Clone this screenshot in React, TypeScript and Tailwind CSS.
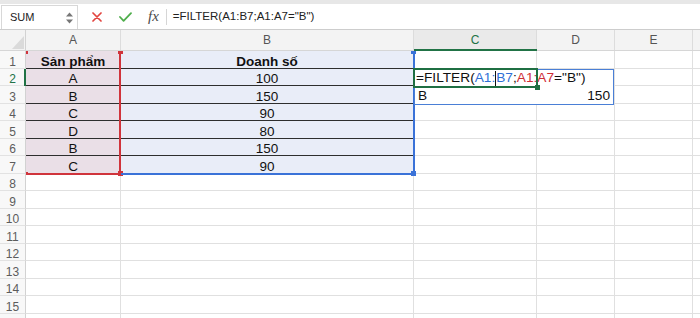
import React from "react";
import clsx from "clsx";

const colA: Record<number, string> = { 1: "Sản phẩm", 2: "A", 3: "B", 4: "C", 5: "D", 6: "B", 7: "C" };
const colB: Record<number, string> = { 1: "Doanh số", 2: "100", 3: "150", 4: "90", 5: "80", 6: "150", 7: "90" };

function Row({ n }: { n: number }) {
  const data = n <= 7;
  const dark = n <= 6;
  return (
    <div className="flex h-[17.5px] shrink-0">
      <div
        className={clsx(
          "relative w-[26px] shrink-0 border-r border-b border-r-[#d2d2d2] border-b-[#e2e2e2] bg-[#f8f8f8] flex items-end justify-center text-[12px] leading-[12px]",
          n === 2 ? "text-[#217346]" : "text-[#5c5c5c]"
        )}
      >
        {n <= 15 ? n : ""}
        {n === 2 && <span className="absolute right-[-1px] top-0 bottom-[-1px] w-[2px] bg-[#217346]" />}
      </div>
      <div
        className={clsx(
          "w-[95px] shrink-0 border-r border-b border-r-[#e0e0e0] flex items-end justify-center text-[13.5px] leading-[12px] text-[#111]",
          data ? "bg-[#eadfe7]" : "bg-white",
          dark ? "border-b-[#2e2e2e]" : "border-b-[#e0e0e0]",
          n === 1 && "font-bold"
        )}
      >
        {colA[n] ?? ""}
      </div>
      <div
        className={clsx(
          "w-[293px] shrink-0 border-r border-b border-r-[#e0e0e0] flex items-end justify-center text-[13.5px] leading-[12px] text-[#111]",
          data ? "bg-[#e9edf8]" : "bg-white",
          dark ? "border-b-[#2e2e2e]" : "border-b-[#e0e0e0]",
          n === 1 && "font-bold"
        )}
      >
        {colB[n] ?? ""}
      </div>
      <div className="w-[123px] shrink-0 border-r border-b border-[#e0e0e0]" />
      <div className="w-[78px] shrink-0 border-r border-b border-[#e0e0e0]" />
      <div className="w-[78px] shrink-0 border-r border-b border-[#e0e0e0]" />
      <div className="flex-1 border-b border-[#e0e0e0]" />
    </div>
  );
}

export default function App() {
  const rows = Array.from({ length: 16 }, (_, i) => i + 1);
  return (
    <div className="relative w-[700px] h-[318px] overflow-hidden bg-white font-['Liberation_Sans',Arial,sans-serif] flex flex-col">
      {/* top band */}
      <div className="h-[4px] shrink-0 bg-[#e7e7e7]" />
      {/* toolbar */}
      <div className="h-[26px] shrink-0 flex items-stretch bg-white border-b border-[#cdcdcd]">
        <div className="ml-[1px] mt-[1px] w-[77px] shrink-0 border-t border-l border-r border-[#d8d8d8] flex items-center justify-between pl-[8px] pr-[3px]">
          <span className="text-[11px] text-[#222]">SUM</span>
          <svg width="9" height="14" viewBox="0 0 9 14">
            <path d="M4.5 1.5 L8 5.5 L1 5.5 Z" fill="#777" />
            <path d="M4.5 12.5 L8 8.5 L1 8.5 Z" fill="#777" />
          </svg>
        </div>
        <div className="flex items-center pl-[14px]">
          <svg width="10" height="10" viewBox="0 0 10 10">
            <path d="M1 1 L9 9 M9 1 L1 9" stroke="#e2443f" strokeWidth="1.7" strokeLinecap="round" />
          </svg>
          <svg className="ml-[17px]" width="13" height="10" viewBox="0 0 13 10">
            <path d="M1 5 L4.6 8.8 L12 1.2" stroke="#4fae4c" strokeWidth="1.8" fill="none" strokeLinecap="round" strokeLinejoin="round" />
          </svg>
          <span className="ml-[16px] font-['Liberation_Serif',serif] italic text-[15px] leading-none text-[#4a4a4a]">fx</span>
          <span className="ml-[7px] w-[1px] h-[16px] bg-[#d6d6d6]" />
          <span className="ml-[6px] text-[11.5px] text-[#222]">=FILTER(A1:B7;A1:A7="B")</span>
        </div>
      </div>
      {/* column header */}
      <div className="h-[21px] shrink-0 flex bg-[#f3f3f3] border-b border-[#d6d6d6] text-[12px] leading-[12px] text-[#555]">
        <div className="w-[26px] shrink-0 border-r border-[#d2d2d2] relative">
          <svg className="absolute left-[12px] top-[6px]" width="12" height="13" viewBox="0 0 12 13">
            <path d="M12 0 L12 13 L0 13 Z" fill="#dadada" />
          </svg>
        </div>
        <div className="w-[95px] shrink-0 border-r border-[#dcdcdc] flex items-center justify-center">A</div>
        <div className="w-[293px] shrink-0 border-r border-[#dcdcdc] flex items-center justify-center">B</div>
        <div className="relative w-[123px] shrink-0 border-r border-[#dcdcdc] bg-[#eaeaea] flex items-center justify-center text-[#217346]">
          C
          <span className="absolute left-0 right-[-1px] bottom-[-1px] h-[2px] bg-[#217346]" />
        </div>
        <div className="w-[78px] shrink-0 border-r border-[#dcdcdc] flex items-center justify-center">D</div>
        <div className="w-[78px] shrink-0 border-r border-[#dcdcdc] flex items-center justify-center">E</div>
        <div className="flex-1" />
      </div>
      {/* rows */}
      {rows.map((n) => (
        <Row key={n} n={n} />
      ))}

      {/* red range A1:A7 */}
      <div className="absolute left-[119px] top-[51px] w-[2px] h-[124px] bg-[#d0343c]" />
      <div className="absolute left-[27px] top-[173px] w-[94px] h-[2px] bg-[#d0343c]" />
      <div className="absolute left-[118px] top-[51px] w-[5px] h-[3px] bg-[#d0343c]" />
      <div className="absolute left-[118px] top-[171px] w-[5px] h-[5px] bg-[#d0343c]" />
      <div className="absolute left-[26px] top-[51px] w-[2px] h-[3px] bg-[#d0343c]" />
      <div className="absolute left-[26px] top-[172px] w-[2px] h-[3px] bg-[#d0343c]" />

      {/* blue range B1:B7 */}
      <div className="absolute left-[413px] top-[51px] w-[2px] h-[124px] bg-[#3a72d8]" />
      <div className="absolute left-[121px] top-[173px] w-[294px] h-[2px] bg-[#3a72d8]" />
      <div className="absolute left-[411px] top-[51px] w-[5px] h-[3px] bg-[#3a72d8]" />
      <div className="absolute left-[411px] top-[171px] w-[5px] h-[5px] bg-[#3a72d8]" />

      {/* formula popup / spill preview */}
      <div className="absolute left-[414px] top-[69px] w-[200px] h-[36px] border border-[#4a7fd6] bg-white flex flex-col text-[13.7px] leading-[12px] text-[#111]">
        <div className="h-[14px] flex items-end pl-[1px] whitespace-nowrap">
          <span>=FILTER(</span>
          <span className="text-[#2f6fd6]">A1:</span>
          <span className="self-end w-[1px] h-[15px] mb-[-2px] bg-[#111]" />
          <span className="text-[#2f6fd6]">B7</span>
          <span>;</span>
          <span className="text-[#cf2e36]">A1:A7</span>
          <span>="B")</span>
        </div>
        <div className="h-[18px] flex items-end justify-between pl-[3px] pr-[3px]">
          <span>B</span>
          <span>150</span>
        </div>
      </div>
      {/* green active cell C2 */}
      <div className="absolute left-[413px] top-[68px] w-[125px] h-[20px] border-2 border-[#1f6f43]" />
      <div className="absolute left-[535px] top-[85px] w-[5px] h-[5px] bg-[#1f6f43]" />
    </div>
  );
}
